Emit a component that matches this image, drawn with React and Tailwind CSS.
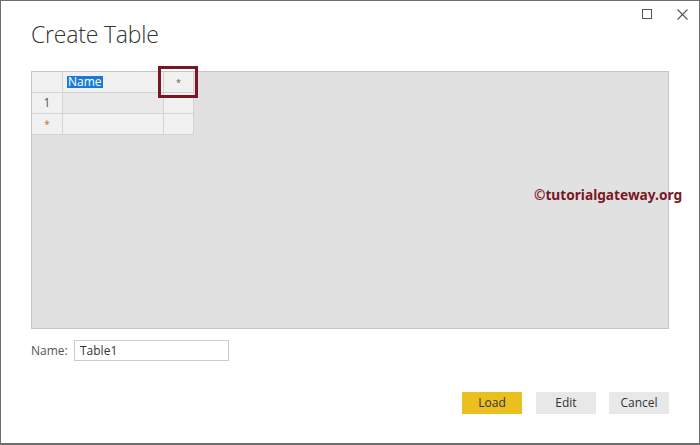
import React from 'react';

const font = { fontFamily: '"Open Sans", "Noto Sans", sans-serif' };

const Cell = ({ className = '', children }) => (
  <div className={`border-r border-b border-[#d3d3d3] flex items-center ${className}`}>{children}</div>
);

const App = () => {
  return (
    <div
      className="relative w-[700px] h-[445px] bg-white border border-[#6e6e6e] border-b-2 flex flex-col pl-[30px] pr-[30px] text-[#333]"
      style={font}
    >
      {/* window controls */}
      <div className="h-[18px] pt-[8px] flex justify-end items-start gap-[25px] -mr-[19px]">
        <div className="w-[10px] h-[10px] border border-[#555]" />
        <svg width="11" height="11" viewBox="0 0 11 11" className="text-[#555]">
          <path d="M0.5 0.5 L10.5 10.5 M10.5 0.5 L0.5 10.5" stroke="currentColor" strokeWidth="1.1" fill="none" />
        </svg>
      </div>

      <h1 className="text-[23px] leading-[31px] font-light text-[#333] tracking-[-0.2px]">Create Table</h1>

      {/* data grid area */}
      <div className="mt-[21px] h-[258px] bg-[#e1e1e1] border border-[#c6c6c6]">
        <div className="grid grid-cols-[31px_101px_30px] grid-rows-[21px_21px_21px] w-max">
          <Cell className="bg-[#f1f1f1]" />
          <Cell className="bg-[#f1f1f1] pl-[4px]">
            <span className="bg-[#1b7bd4] text-white text-[12px] leading-[11px] px-[1px] pb-[1px]">Name</span>
          </Cell>
          <Cell className="bg-[#f1f1f1] justify-center relative">
            <span className="text-[9px] text-[#6b5a3a] leading-none">*</span>
            <div className="absolute -left-[6px] -top-[6px] -right-[5px] -bottom-[6px] border-[3px] border-[#7b1624]" />
          </Cell>

          <Cell className="bg-[#f1f1f1] justify-center text-[12px] text-[#555]">1</Cell>
          <Cell className="bg-[#e9e9e9]" />
          <Cell className="bg-[#f1f1f1]" />

          <Cell className="bg-[#f1f1f1] justify-center">
            <span className="text-[10px] text-[#d0691e] leading-none">*</span>
          </Cell>
          <Cell className="bg-[#f1f1f1]" />
          <Cell className="bg-[#f1f1f1]" />
        </div>
      </div>

      {/* name field */}
      <div className="mt-[11px] flex items-center h-[21px]">
        <span className="text-[12px] text-[#555] w-[43px]">Name:</span>
        <div className="w-[155px] h-[21px] border border-[#cccccc] flex items-center pl-[5px] text-[12px] text-[#333]">
          Table1
        </div>
      </div>

      {/* buttons */}
      <div className="mt-[31px] flex justify-end gap-[14px] text-[12px] text-[#333]">
        <button className="w-[60px] h-[22px] bg-[#ebbf1e]">Load</button>
        <button className="w-[60px] h-[22px] bg-[#e8e8e8]">Edit</button>
        <button className="w-[60px] h-[22px] bg-[#e8e8e8] -ml-[1px]">Cancel</button>
      </div>

      {/* watermark */}
      <div
        className="absolute left-[533px] top-[184px] text-[13.7px] font-bold text-[#7b1624]"
        style={{ fontFamily: '"Noto Sans", sans-serif' }}
      >
        ©tutorialgateway.org
      </div>
    </div>
  );
};

export default App;
